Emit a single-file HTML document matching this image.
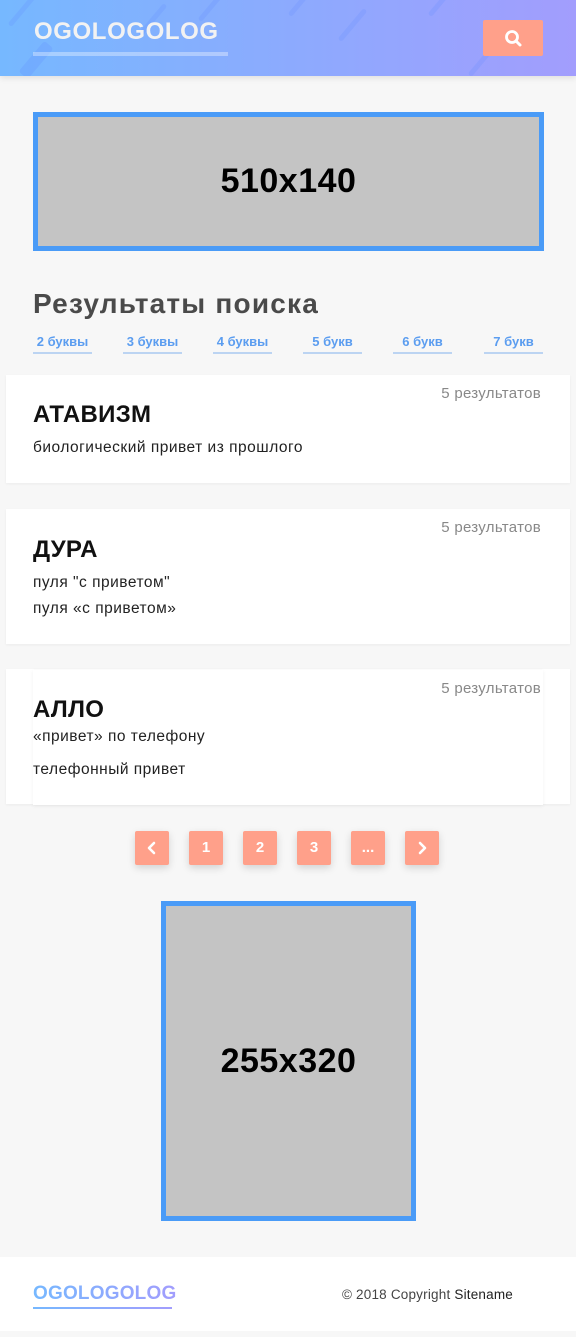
<!DOCTYPE html>
<html><head><meta charset="utf-8"><style>
*{margin:0;padding:0;box-sizing:border-box}
body{width:576px;height:1337px;background:#f7f7f7;font-family:"Liberation Sans","DejaVu Sans",sans-serif;position:relative;overflow:hidden}
.a{position:absolute}
header{position:absolute;left:0;top:0;width:576px;height:76px;background:linear-gradient(90deg,#76b8ff,#a29dfd);box-shadow:0 2px 6px rgba(0,0,0,.1);overflow:hidden}
.stripe{position:absolute;width:5px;height:40px;background:rgba(100,140,255,.22);transform:rotate(40deg);border-radius:3px}
.card{position:absolute;left:6px;width:564px;background:#fff;box-shadow:0 1px 3px rgba(0,0,0,.05)}
.cnt{position:absolute;right:29px;font-size:15px;color:#888;letter-spacing:0.3px}
.ttl{position:absolute;left:27px;font-size:24px;font-weight:bold;color:#111;letter-spacing:0.3px}
.ln{position:absolute;left:27px;font-size:15.5px;color:#222;letter-spacing:0.5px}
.tab{position:absolute;top:334px;width:59px;text-align:center;font-size:13px;font-weight:bold;color:#5b9df0;padding-bottom:3px;border-bottom:2px solid #bcd4f2}
.pg{position:absolute;top:831px;width:34px;height:34px;background:#ffa08a;color:#fff;font-weight:bold;font-size:15px;text-align:center;line-height:34px;border-radius:2px;box-shadow:0 3px 8px rgba(0,0,0,.15)}
.pg svg{position:absolute;left:0;top:0}
.ad{position:absolute;background:#c4c4c4;border:5px solid #4a9bf7;display:flex;align-items:center;justify-content:center;font-weight:bold;font-size:34px;color:#000;letter-spacing:0.5px}
</style></head><body>
<header>
<div class="stripe" style="left:20px;top:-10px"></div>
<div class="stripe" style="left:30px;top:40px;width:12px;height:40px;background:rgba(90,130,255,.18)"></div>
<div class="stripe" style="left:150px;top:0"></div>
<div class="stripe" style="left:210px;top:-15px"></div>
<div class="stripe" style="left:300px;top:-20px"></div>
<div class="stripe" style="left:350px;top:5px"></div>
<div class="stripe" style="left:440px;top:-20px"></div>
<div class="stripe" style="left:480px;top:40px"></div>
<div class="a" style="left:34px;top:18px;font-size:24px;font-weight:bold;color:#f2f2f2;letter-spacing:0.6px">OGOLOGOLOG</div>
<div class="a" style="left:33px;top:52px;width:195px;height:4px;background:rgba(255,255,255,.35)"></div>
<div class="a" style="left:483px;top:20px;width:60px;height:36px;background:#ffa08a;border-radius:2px">
<svg width="60" height="36" viewBox="0 0 60 36"><circle cx="29" cy="17" r="5.5" fill="none" stroke="#fff" stroke-width="2.8"/><line x1="33" y1="21" x2="37" y2="25" stroke="#fff" stroke-width="3" stroke-linecap="round"/></svg></div>
</header>
<div class="ad" style="left:33px;top:112px;width:511px;height:139px">510x140</div>
<div class="a" style="left:33px;top:288px;font-size:28px;font-weight:bold;color:#4a4a4a;letter-spacing:1.2px">Результаты поиска</div>
<div class="tab" style="left:33px">2 буквы</div>
<div class="tab" style="left:123px">3 буквы</div>
<div class="tab" style="left:213px">4 буквы</div>
<div class="tab" style="left:303px">5 букв</div>
<div class="tab" style="left:393px">6 букв</div>
<div class="tab" style="left:484px">7 букв</div>
<div class="card" style="top:375px;height:108px">
<div class="cnt" style="top:10px">5 результатов</div>
<div class="ttl" style="top:26px">АТАВИЗМ</div>
<div class="ln" style="top:64px">биологический привет из прошлого</div>
</div>
<div class="card" style="top:509px;height:135px">
<div class="cnt" style="top:10px">5 результатов</div>
<div class="ttl" style="top:27px">ДУРА</div>
<div class="ln" style="top:65px">пуля "с приветом"</div>
<div class="ln" style="top:91px">пуля «с приветом»</div>
</div>
<div class="card" style="top:669px;height:135px">
<div class="a" style="left:27px;top:1px;width:510px;height:135px;background:#fff;box-shadow:0 1px 4px rgba(0,0,0,.06)"></div>
<div class="cnt" style="top:11px">5 результатов</div>
<div class="ttl" style="top:27px">АЛЛО</div>
<div class="ln" style="top:59px">«привет» по телефону</div>
<div class="ln" style="top:92px">телефонный привет</div>
</div>
<div class="pg" style="left:135px"><svg width="34" height="34"><path d="M19 12l-5 5 5 5" fill="none" stroke="#fff" stroke-width="2.6" stroke-linecap="round" stroke-linejoin="round"/></svg></div>
<div class="pg" style="left:189px">1</div>
<div class="pg" style="left:243px">2</div>
<div class="pg" style="left:297px">3</div>
<div class="pg" style="left:351px">...</div>
<div class="pg" style="left:405px"><svg width="34" height="34"><path d="M15 12l5 5-5 5" fill="none" stroke="#fff" stroke-width="2.6" stroke-linecap="round" stroke-linejoin="round"/></svg></div>
<div class="ad" style="left:161px;top:901px;width:255px;height:320px">255x320</div>
<div class="a" style="left:0;top:1257px;width:576px;height:74px;background:#fff">
<div class="a" style="left:33px;top:26px;font-size:19px;font-weight:bold;letter-spacing:0.2px;background:linear-gradient(90deg,#76b8ff,#a29dfd);-webkit-background-clip:text;color:transparent">OGOLOGOLOG</div>
<div class="a" style="left:33px;top:50px;width:139px;height:2px;background:linear-gradient(90deg,#76b8ff,#a29dfd)"></div>
<div class="a" style="right:63px;top:30px;font-size:13.5px;color:#444;letter-spacing:0.2px">© 2018 Copyright <span style="color:#222">Sitename</span></div>
</div>
</body></html>
